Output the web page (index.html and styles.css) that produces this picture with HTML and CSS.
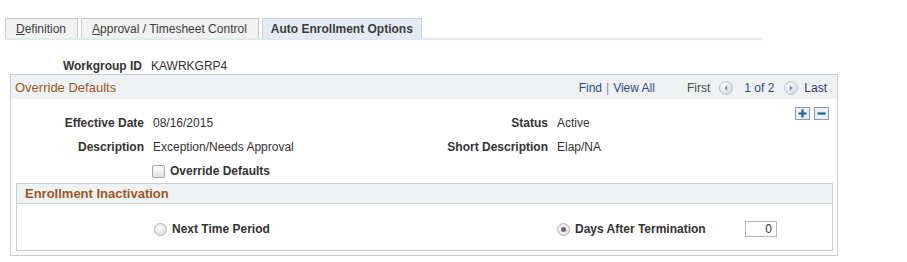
FILE: index.html
```html
<!DOCTYPE html>
<html>
<head>
<meta charset="utf-8">
<link rel="stylesheet" href="styles.css">
</head>
<body>
<div class="tabs">
  <div class="tab"><u>D</u>efinition</div>
  <div class="tab"><u>A</u>pproval / Timesheet Control</div>
  <div class="tab active">Auto Enrollment Options</div>
</div>

<div class="wg-row">
  <span class="lbl wg-lbl">Workgroup ID</span>
  <span class="val">KAWRKGRP4</span>
</div>

<div class="box">
  <div class="box-head">
    <span class="box-title">Override Defaults</span>
    <div class="nav">
      <span class="link">Find</span><span class="sep">|</span><span class="link">View All</span>
      <span class="first">First</span>
      <svg class="arrow" width="14" height="14" viewBox="0 0 14 14">
        <defs><radialGradient id="g1" cx="0.4" cy="0.35" r="0.7"><stop offset="0" stop-color="#ffffff"/><stop offset="1" stop-color="#cfd3d8"/></radialGradient></defs>
        <circle cx="7" cy="7" r="6.5" fill="url(#g1)" stroke="#c2c6cb"/>
        <path d="M8.3 4.3 L5.2 7 L8.3 9.7 Z" fill="#8c8c8c"/>
      </svg>
      <span class="count">1 of 2</span>
      <svg class="arrow" width="14" height="14" viewBox="0 0 14 14">
        <defs><radialGradient id="g2" cx="0.4" cy="0.35" r="0.7"><stop offset="0" stop-color="#ffffff"/><stop offset="1" stop-color="#cdd6e2"/></radialGradient></defs>
        <circle cx="7" cy="7" r="6.5" fill="url(#g2)" stroke="#bcc6d3"/>
        <path d="M5.8 4.3 L8.9 7 L5.8 9.7 Z" fill="#6f8fc0"/>
      </svg>
      <span class="last">Last</span>
    </div>
  </div>
  <div class="box-body">
    <div class="fields">
      <span class="lbl">Effective Date</span><span class="val">08/16/2015</span>
      <span class="lbl">Status</span><span class="val">Active</span>
      <span class="lbl">Description</span><span class="val">Exception/Needs Approval</span>
      <span class="lbl">Short Description</span><span class="val">Elap/NA</span>
      <span></span>
      <span class="val check-row"><span class="checkbox"></span><span class="bold">Override Defaults</span></span>
      <span></span><span></span>
    </div>
    <div class="btns">
      <span class="btn"><svg width="11" height="11" viewBox="0 0 11 11"><path d="M1.5 5.5 H9.5 M5.5 1.5 V9.5" stroke="#2b5b9c" stroke-width="2.2"/></svg></span>
      <span class="btn"><svg width="11" height="11" viewBox="0 0 11 11"><path d="M1.5 5.5 H9.5" stroke="#2b5b9c" stroke-width="2.2"/></svg></span>
    </div>
  </div>
  <div class="sub">
    <div class="sub-head">Enrollment Inactivation</div>
    <div class="sub-body">
      <span></span>
      <span class="radio-item"><span class="radio"></span><span class="bold">Next Time Period</span></span>
      <span class="radio-item"><span class="radio on"></span><span class="bold">Days After Termination</span></span>
      <span class="input">0</span>
    </div>
  </div>
</div>
</body>
</html>
```

FILE: styles.css
```css
body {
  margin: 0;
  font-family: Arial, "Liberation Sans", sans-serif;
  font-size: 12px;
  color: #333333;
  background: #ffffff;
}

.tabs {
  display: flex;
  gap: 3px;
  margin: 18px 0 0 5px;
  width: 757px;
  border-bottom: 2px solid #dfe8f4;
}

.tab {
  height: 19px;
  line-height: 20px;
  padding: 0 11px 0 10px;
  border: 1px solid #cacaca;
  border-bottom: none;
  background: #f2f2f2;
  color: #3c3c3c;
  font-size: 12px;
}

.tab.active {
  background: #e4ebf5;
  border-color: #c9d2de;
  font-weight: bold;
  color: #3c3c3c;
  padding: 0 8px;
}

.wg-row {
  display: flex;
  align-items: center;
  margin-top: 18px;
  height: 16px;
}

.wg-lbl {
  width: 142px;
  text-align: right;
  padding-right: 9px;
}

.lbl {
  font-weight: bold;
  color: #333333;
  text-align: right;
}

.val {
  color: #333333;
}

.bold {
  font-weight: bold;
  color: #333333;
}

.box {
  margin: 0 0 0 10px;
  width: 826px;
  border: 1px solid #cbcfd3;
  position: relative;
}

.box-head {
  display: flex;
  align-items: center;
  justify-content: space-between;
  height: 23px;
  background: #eff2f3;
  padding: 1px 10px 0 4px;
}

.box-title {
  font-size: 13px;
  color: #a0561f;
}

.nav {
  display: flex;
  align-items: center;
  color: #4a4a4a;
}

.link {
  color: #2c4b8f;
}

.sep {
  color: #7a8aa8;
  margin: 0 4px;
}

.first {
  margin-left: 32px;
  margin-right: 9px;
  color: #4a4a4a;
}

.count {
  margin: 0 10px 0 11px;
  color: #2c4b8f;
}

.last {
  margin-left: 6px;
  color: #33337f;
}

.arrow {
  display: block;
}

.box-body {
  display: flex;
  justify-content: space-between;
  padding: 8px 8px 0 0;
}

.fields {
  display: grid;
  grid-template-columns: 133px 250px 154px auto;
  grid-auto-rows: 24px;
  align-items: center;
  margin-top: 4px;
}

.fields .val {
  padding-left: 9px;
}

.check-row {
  display: flex;
  align-items: center;
  gap: 5px;
  padding-left: 8px !important;
}

.checkbox {
  width: 11px;
  height: 11px;
  border: 1px solid #a6a6a6;
  border-radius: 2px;
  background: linear-gradient(#ffffff, #e3e3e3);
}

.btns {
  display: flex;
  gap: 4px;
  align-self: flex-start;
}

.btn {
  width: 13px;
  height: 11px;
  border: 1px solid #8d9cab;
  background: #e9eff5;
  display: flex;
  align-items: center;
  justify-content: center;
}

.btn svg {
  display: block;
}

.sub {
  margin: 0 4px 4px 5px;
  border: 1px solid #cbcfd3;
}

.sub-head {
  height: 19px;
  line-height: 19px;
  background: #eff2f3;
  border-bottom: 1px solid #cbcfd3;
  padding-left: 8px;
  font-size: 13px;
  font-weight: bold;
  color: #a0561f;
}

.sub-body {
  display: grid;
  grid-template-columns: 137px 403px 188px auto;
  align-items: center;
  height: 16px;
  padding: 17px 0 13px;
}

.radio-item {
  display: flex;
  align-items: center;
  gap: 5px;
}

.radio {
  width: 11px;
  height: 11px;
  border: 1px solid #b3b3b3;
  border-radius: 50%;
  background: radial-gradient(circle at 40% 35%, #ffffff, #d5d5d5);
  position: relative;
}

.radio.on::after {
  content: "";
  position: absolute;
  left: 3px;
  top: 3px;
  width: 5px;
  height: 5px;
  border-radius: 50%;
  background: #6a6a6a;
}

.input {
  width: 26px;
  height: 14px;
  line-height: 14px;
  border: 1px solid #b5b5b5;
  text-align: right;
  padding-right: 4px;
  color: #333333;
}
```
